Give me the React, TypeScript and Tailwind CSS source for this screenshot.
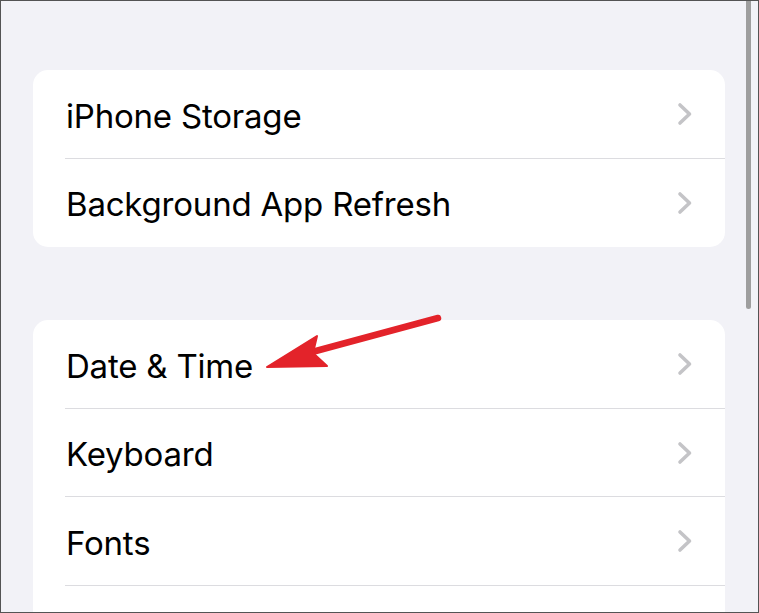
import React from "react";

function Chevron() {
  return (
    <svg width="16" height="24" viewBox="0 0 16 24" className="shrink-0">
      <path d="M3 3 L12.5 12 L3 21" fill="none" stroke="#c4c4c7" strokeWidth="3.6" strokeLinecap="round" strokeLinejoin="round" />
    </svg>
  );
}

function Row({ label, last }: { label: string; last?: boolean }) {
  return (
    <div className="relative h-[88.5px] flex items-center pl-[33px] pr-[32px]">
      <span className="flex-1 pt-[4px] text-[33px] text-black tracking-[-0.2px]" style={{ fontFamily: "Inter, 'Liberation Sans', sans-serif" }}>
        {label}
      </span>
      {label && <Chevron />}
      {!last && <div className="absolute left-[32px] right-0 bottom-0 h-px bg-[#dcdce0]" />}
    </div>
  );
}

export default function App() {
  return (
    <div className="relative w-[759px] h-[613px] overflow-hidden bg-[#f2f2f7] border border-[#545454]">
      <div className="pl-[32px] pt-[69px] w-[724px] flex flex-col gap-[73px]">
        <div className="bg-white rounded-[15px]">
          <Row label="iPhone Storage" />
          <Row label="Background App Refresh" last />
        </div>
        <div className="bg-white rounded-t-[15px]">
          <Row label="Date & Time" />
          <Row label="Keyboard" />
          <Row label="Fonts" />
          <Row label="" last />
        </div>
      </div>
      <div className="absolute left-[745px] top-0 w-[5px] h-[308px] rounded-b-full bg-[#9e9e9e]" />
      <svg className="absolute left-0 top-0" width="759" height="613">
        <line x1="437" y1="317" x2="300" y2="354" stroke="#e3232a" strokeWidth="6.5" strokeLinecap="round" />
        <path d="M266 366 L316 335 L312 352 L326 365 Z" fill="#e3232a" stroke="#e3232a" strokeWidth="2" strokeLinejoin="round" />
      </svg>
    </div>
  );
}
